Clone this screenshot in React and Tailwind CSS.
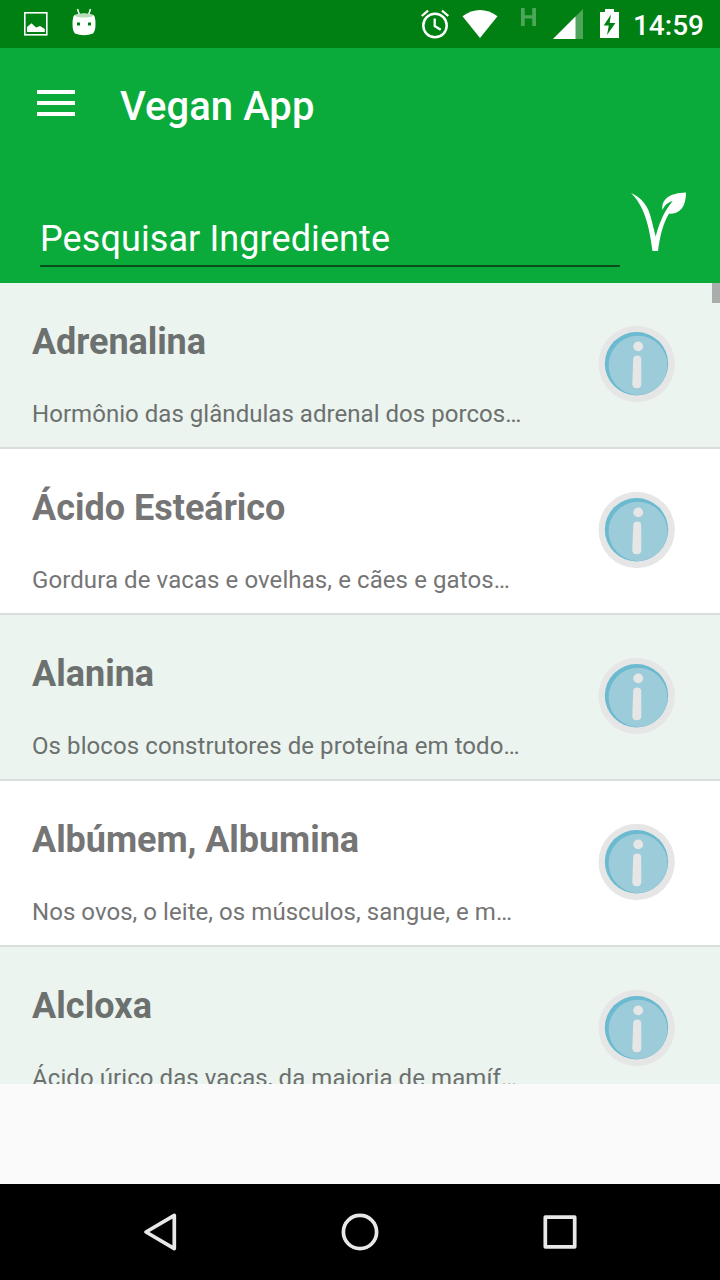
const items = [
  { name: 'Adrenalina', text: 'Hormônio das glândulas adrenal dos porcos…', tracking: 'tracking-[0.04px]', titleTracking: 'tracking-[-0.08px]' },
  { name: 'Ácido Esteárico', text: 'Gordura de vacas e ovelhas, e cães e gatos…', tracking: 'tracking-[0.09px]', titleTracking: 'tracking-normal' },
  { name: 'Alanina', text: 'Os blocos construtores de proteína em todo…', tracking: 'tracking-[0.08px]', titleTracking: 'tracking-normal' },
  { name: 'Albúmem, Albumina', text: 'Nos ovos, o leite, os músculos, sangue, e m…', tracking: 'tracking-[0.05px]', titleTracking: 'tracking-[-0.06px]' },
  { name: 'Alcloxa', text: 'Ácido úrico das vacas, da maioria de mamíf…', tracking: 'tracking-[0.08px]', titleTracking: 'tracking-[0.08px]' },
];

function InfoIcon() {
  return (
    <svg className="h-[78px] w-[78px] shrink-0" viewBox="598 325 78 78">
      <circle cx="636.7" cy="364" r="38.2" fill="#e6e6e6" />
      <circle cx="636.5" cy="363.7" r="31.7" fill="#6bbad0" />
      <ellipse cx="638" cy="365.4" rx="29.4" ry="29.6" fill="#9ccbd9" />
      <circle cx="638.2" cy="346.4" r="4.9" fill="#e6e6e6" />
      <path d="M633.200 359q0-3.500 4-3.500t4 3.500l.1 25q0 4.200-4.500 4.200t-4.500-4.200z" fill="#e6e6e6" />
    </svg>
  );
}

function StatusBar() {
  return (
    <div className="flex h-12 shrink-0 items-center bg-[#008012] text-white">
      <svg className="h-12 w-[100px]" viewBox="0 0 100 48" fill="#fff">
        <rect x="24.800" y="12.800" width="22" height="22" fill="none" stroke="#fff" strokeWidth="1.600" />
        <path d="M27 32v-5l4.500-3.800 4.500 4.300 4-1.500 4.800 3v3z" />
        <path d="M77.500 9l2 6M90.500 9l-2 6" stroke="#fff" strokeWidth="1.500" />
        <path d="M74.500 15q9.500-3 19 0 2 2 2 9 0 7-2.500 9.500-9 3.500-18 0-2.500-2.500-2.500-9.500 0-7 2-9z" />
        <path d="M74.500 15.500q2-2 9.500-2t9.500 2q-2 2-9.500 2t-9.500-2z" fill="#b8dcb9" />
        <rect x="77" y="22.500" width="3" height="3" fill="#008012" />
        <rect x="88" y="22.500" width="3" height="3" fill="#008012" />
      </svg>
      <svg className="ml-auto h-12 w-[220px]" viewBox="410 0 220 48" fill="#fff">
        <circle cx="435" cy="25.500" r="11.700" fill="none" stroke="#fff" strokeWidth="2.500" />
        <path d="M434.700 18.500v7.500l6 3.800M421.800 16l6.300-5.400M448.300 16l-6.300-5.400" fill="none" stroke="#fff" strokeWidth="2.300" />
        <path d="M462.500 16.300Q480 3.700 497.500 16.300L480 38z" />
        <path d="M521 8h3.700v7.300h7.500V8h3.800v18h-3.800v-7.500h-7.500V26H521z" fill="#4da659" />
        <path d="M583 9v30h-30z" fill="#4da659" />
        <path d="M575.500 16.500V39H553z" />
        <path d="M600 12h5V9h9v3h5v26h-19z" />
        <path d="M611 14.500l-7.300 11h5.100l-1.800 9.500 8.400-12h-5.800z" fill="#008012" />
      </svg>
      <span className="mr-4 ml-[3px] translate-y-[2px] text-[28px] leading-8 font-medium">14:59</span>
    </div>
  );
}

function Header() {
  return (
    <header className="flex h-[235px] shrink-0 flex-col bg-[#0aab3b] text-white">
      <div className="flex h-[116px] items-center">
        <button className="ml-[37px] flex h-[26px] w-[38px] -translate-y-[3px] flex-col justify-between" aria-label="Menu">
          <span className="h-1 w-full bg-white" />
          <span className="h-1 w-full bg-white" />
          <span className="h-1 w-full bg-white" />
        </button>
        <h1 className="mt-[2px] ml-[45px] text-[40px] leading-[48px] font-medium tracking-[0.05px]">Vegan App</h1>
      </div>
      <div className="flex items-start">
        <div className="mt-[53px] ml-10 flex h-[50px] w-[580px] border-b-2 border-[#084f1b] pt-px">
          <span className="text-[36px] leading-[42px] tracking-[0.09px]">Pesquisar Ingrediente</span>
        </div>
        <svg className="mt-[24px] ml-[8px] h-[66px] w-[62px]" viewBox="628 188 62 66" fill="#fff">
          <path d="M631 193C642 198 648.500 206 651.500 220L655.700 236.500C659 224 664 211 672.700 201C666 203 664.500 206 662.500 210C661 199 670 193 686 192.500C686 207 680 214 669 213.700C663 223 660 236 658 251H652.500C649 224 644 206 631 193z" />
        </svg>
      </div>
    </header>
  );
}

export default function App() {
  return (
    <div className="flex h-[1280px] w-[720px] flex-col overflow-hidden bg-[#fafafa] font-[Roboto,sans-serif]">
      <StatusBar />
      <Header />
      <main className="relative h-[801px] shrink-0 overflow-hidden">
        {items.map((item, i) => (
          <div
            key={item.name}
            className={`flex h-[166px] justify-between border-b-2 border-[#d9dddb] pr-[44px] pl-8 ${i % 2 === 0 ? 'bg-[#ebf4ef]' : 'bg-white'}`}
          >
            <div className={`pt-[38px] ${i % 2 === 0 ? 'text-[#6c706e]' : 'text-[#757575]'}`}>
              <h2 className={`text-[36px] leading-[42px] font-bold ${item.titleTracking}`}>{item.name}</h2>
              <p className={`mt-[37px] text-[24px] leading-7 ${item.tracking}`}>{item.text}</p>
            </div>
            <div className="pt-[42px]">
              <InfoIcon />
            </div>
          </div>
        ))}
        <div className="absolute top-0 right-0 h-5 w-2 bg-[#a9adab]" />
      </main>
      <nav className="mt-auto h-24 shrink-0 bg-black">
        <svg className="h-24 w-full" viewBox="0 1184 720 96" fill="none" stroke="#e8e8e8" strokeWidth="3.700" strokeLinejoin="round">
          <path d="M146 1232l28.300-16.600v33.200z" />
          <circle cx="360" cy="1232" r="16.600" />
          <rect x="545.300" y="1217.200" width="29.400" height="29.600" />
        </svg>
      </nav>
    </div>
  );
}
